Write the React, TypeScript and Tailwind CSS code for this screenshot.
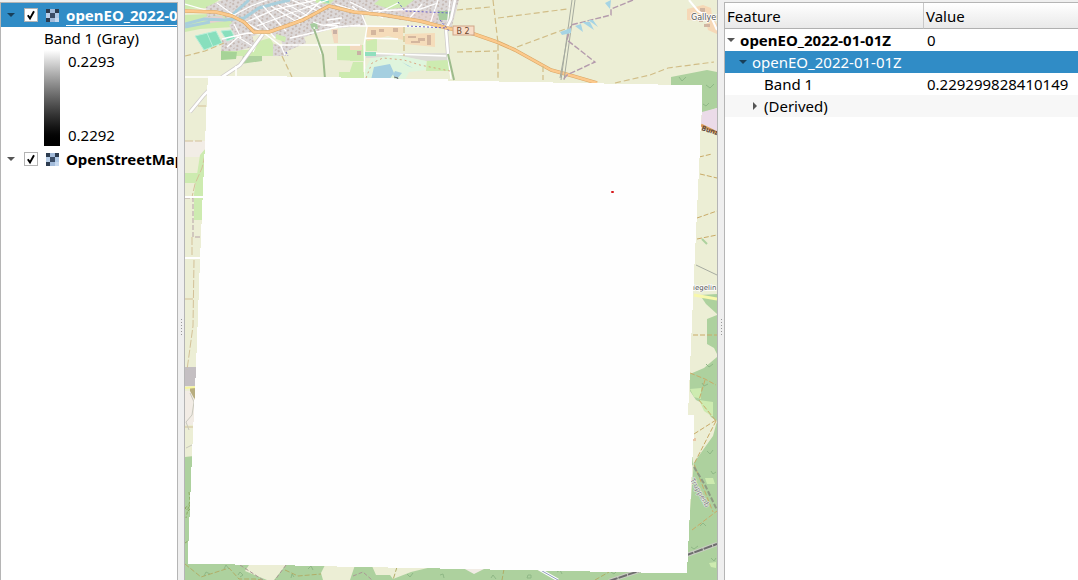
import React from "react";

function Arrow({ open = true, color = "#555", label, className = "" }: { open?: boolean; color?: string; label: string; className?: string }) {
  return (
    <button type="button" aria-label={label} aria-expanded={open} className={"flex h-3 w-3 shrink-0 items-center justify-center " + className}>
      <svg width="8" height="8" viewBox="0 0 8 8">
        <path d={open ? "M0 2H8L4 6Z" : "M2 0V8L6 4Z"} fill={color} />
      </svg>
    </button>
  );
}

function RasterIcon() {
  const cells = [
    [0, 0, "#2d3c50"], [4, 0, "#a3bbda"], [9, 0, "#2d3c50"],
    [0, 4, "#b9cfe9"], [4, 4, "#3b4c66"], [9, 4, "#b0c9e6"],
    [0, 9, "#2d3c50"], [4, 9, "#a3bbda"], [9, 9, "#c6d8ee"],
  ] as const;
  return (
    <svg width="13" height="13" viewBox="0 0 13 13" className="shrink-0" shapeRendering="crispEdges">
      {cells.map(([x, y, c]) => (
        <rect key={x + "-" + y} x={x} y={y} width={x === 4 ? 5 : 4} height={y === 4 ? 5 : 4} fill={c} />
      ))}
    </svg>
  );
}

function LayerRow({ name, selected = false }: { name: string; selected?: boolean }) {
  return (
    <div className={"flex h-6 items-center overflow-hidden whitespace-nowrap " + (selected ? "bg-[#308cc6] text-white" : "")}>
      <Arrow label={"Toggle " + name} color={selected ? "#183f5a" : "#555"} className="ml-1" />
      <label className="ml-[7px] flex items-center">
        <span className="grid h-[14px] w-[14px] shrink-0">
          <input type="checkbox" defaultChecked className="peer col-start-1 row-start-1 h-[14px] w-[14px] appearance-none border border-[#b4b4b4] bg-white" />
          <svg width="14" height="14" viewBox="0 0 14 14" className="pointer-events-none invisible col-start-1 row-start-1 peer-checked:visible">
            <path d="M3.8 7.2L6 10.4L10 3.2" fill="none" stroke="#000" strokeWidth="1.9" />
          </svg>
        </span>
        <span className="ml-2 flex"><RasterIcon /></span>
        <span className={"ml-[7px] font-bold " + (selected ? "underline decoration-1 underline-offset-4" : "")}>{name}</span>
      </label>
    </div>
  );
}

function Splitter() {
  return (
    <div role="separator" aria-orientation="vertical" className="flex w-[6px] shrink-0 flex-col items-center justify-center gap-[2px] bg-[#efefef] pt-[73px]">
      {[0, 1, 2, 3, 4, 5].map((i) => (
        <span key={i} className="h-px w-px bg-[#999]" />
      ))}
    </div>
  );
}

function MapCanvas() {
  return (
    <svg className="h-full w-full" viewBox="185 0 532 580" preserveAspectRatio="xMinYMin slice" role="img" aria-label="Map canvas">
      <defs>
        <pattern id="houses" width="9" height="7" patternUnits="userSpaceOnUse" patternTransform="rotate(-28)">
          <rect width="9" height="7" fill="#dcd8d8" />
          <path d="M1 1h2v2H1zM5 0h2v2H5zM7 4h2v2H7zM3 5h2v1H3z" fill="#c6b9b3" />
        </pattern>
      </defs>
      <rect x="185" y="0" width="532" height="580" fill="#eceed5" />

      <g id="fields">
        <path d="M185 0H219L207 8L185 9Z" fill="#cdebb0" />
        <path d="M185 15L210 14L236 18L234 27L200 29L185 32Z" fill="#cdebb0" />
        <path d="M204 17L222 16L226 21L210 23Z" fill="#e6cfd0" />
        <path d="M270 38L276 48L273 56L262 56L250 50L252 43Z" fill="#cdebb0" />
        <path d="M221 50H273V56H221Z" fill="#cdebb0" />
        <path d="M221 51L237 52L236 59L221 60Z" fill="#a6d397" />
        <path d="M243 56H262V61L241 64Z" fill="#add19e" />
        <path d="M337 45H361V61L337 60ZM339 72H372V79H339Z" fill="#cdebb0" />
        <path d="M350 45H364V61H350ZM353 62H363V80H350V71Z" fill="#cdebb0" />
        <path d="M366 40L377 37V51H366Z" fill="#cdebb0" />
        <path d="M427 59L447 57L450 71H426Z" fill="#cdebb0" />
        <path d="M366 53H447L448 60L426 61L405 57L366 58Z" fill="#dcdcd6" />
        <path d="M671 77L707 70L717 72V108L702 113V85H671Z" fill="#add19e" />
        <path d="M702 112L717 108V132L701 124Z" fill="#ebdbe8" />
      </g>

      <g id="town">
        <path d="M206 7L222 0H459L453 22L451 30L430 24L408 21L369 15L338 7L345 20L338 27L304 37L306 43L285 52L281 40L264 30L245 29L238 27L222 15L207 17Z" fill="url(#houses)" />
        <path d="M338 7L364 14L365 26L338 28L322 24Z" fill="url(#houses)" />
        <path d="M222 38L252 35L255 46L238 51H221ZM273 44L287 46L286 56H273ZM235 21L264 31L254 36L235 36L229 25Z" fill="url(#houses)" />
        <path d="M313 0H334L330 4L317 3ZM379 0H414L405 7L390 9L374 4ZM276 34L286 37L285 42L276 39Z" fill="#cdebb0" />
        <path d="M392 9L438 12L436 22L408 18Z" fill="#e6cfcd" opacity=".55" />
        <path d="M438 11H453L449 20H439ZM310 24L317 22L318 29H312Z" fill="#a8cda0" />
        <path d="M195 36L216 31L222 43L204 50ZM221 31L231 30L235 38L227 41Z" fill="#88dfbd" stroke="#b7eed9" />
        <path d="M207 33L213 47" stroke="#b7eed9" />
        <path d="M320 0l9 2" stroke="#8ddcba" strokeWidth="2" />
        <path d="M366 27L403 27V40L388 36L367 41ZM405 34L435 33V47L405 44Z" fill="#f5dcba" />
        <path d="M371 30h5v5h-5zM379 29h5v3h-5zM393 28h5v4h-5zM408 36h8v2h-8zM418 38h7v3h-7zM411 41h9v2h-9zM427 35h4v10h-4z" fill="#d4b69e" />
        <path d="M331 29h7v14h-4zM350 45h12v5h-12z" fill="#f2d9bf" />
        <path d="M333 30h4v4h-4zM357 51h4v4h-4z" fill="#c9b1a5" />
      </g>

      <g fill="none">
        <path d="M185 24L204 19L225 20L244 18L259 8L277 3L290 0M231 16L249 0M185 27L210 22" stroke="#a9cfdc" strokeWidth="3" />
        <g stroke="#fff" strokeWidth="1.3">
          <path d="M185 4L223 15M217 3L235 16L262 32M234 15L251 6L267 0M254 14L275 38M263 6L286 31M271 6L300 24M278 5L302 19M285 3L308 16M292 0L320 12M305 0L321 8M246 22L276 9L316 0M257 26L291 13L328 0M289 24L306 15L321 1M222 39L248 33L261 34M227 47L238 37L254 47M234 24L241 38M262 32L253 52M264 33L281 46L285 55M279 45H360M290 38L338 27L360 25M313 22L322 25L338 26M314 27L321 54M327 20L342 18M326 25L340 23M352 6L362 15L367 27L364 45L365 79M350 26H367M365 38L398 39" />
          <path d="M335 4L369 15M350 2L383 18M373 11L420 9L438 3M378 13L398 3M407 21L422 4M438 0L430 24M450 0L447 28M367 26L450 27M366 53L446 56M447 29L448 58L451 79" />
        </g>
        <path d="M455 0L451 19L446 29L448 54M263 34L240 65L222 77L204 95L190 112" stroke="#d0cccb" strokeWidth="4" />
        <path d="M455 0L451 19L446 29L448 54M263 34L240 65L222 77L204 95L190 112" stroke="#fff" strokeWidth="2.5" />
        <path d="M236 66V76M185 77H212" stroke="#fff" strokeWidth="1.5" />
        <path d="M314 29L323 55L325 79M448 54L454 80" stroke="#9dbb8c" strokeWidth="2" />
        <path d="M185 11L216 12L232 16L244 22L254 32L269 32L303 20L329 6L354 12L384 15L420 21L447 28L474 34L497 42L515 50L551 70L573 76L597 83" stroke="#d9a765" strokeWidth="3.6" strokeLinejoin="round" />
        <path d="M185 11L216 12L232 16L244 22L254 32L269 32L303 20L329 6L354 12L384 15L420 21L447 28L474 34L497 42L515 50L551 70L573 76L597 83" stroke="#fcc98c" strokeWidth="2.4" strokeLinejoin="round" />
        <path d="M185 56L205 51L224 43M282 56L292 77M404 27V56M457 10L490 7M493 0L498 43L498 80M498 18L567 9M457 52L497 51M517 47L568 28M543 66V80M615 83L650 75L668 68L714 62" stroke="#d1bd87" strokeWidth="1.2" strokeDasharray="6 3" />
        <path d="M572 0L561 80M575 0L564 80M569 29L560 78" stroke="#a5aa9f" strokeWidth="1" />
        <path d="M633 0L611 9V15L571 25L567 40L595 62L567 75L563 80" stroke="#b49bad" strokeWidth="1.4" strokeDasharray="6 2" />
        <path d="M398 2L405 11L450 13M407 26L447 28M286 52L288 56M440 20L450 32" stroke="#6963cc" strokeWidth="1" strokeDasharray="2 2" />
      </g>

      <g id="lakes">
        <path d="M371 58L397 55L426 61L426 70L409 72L405 80H367L365 70Z" fill="#dff5dd" />
        <path d="M374 67L390 64L394 73L389 80H371ZM395 71L402 73L397 79L393 75ZM402 62L408 66L413 68" fill="#a5cfe0" />
        <path d="M366 78L372 63L383 58L404 60L420 65L450 71" fill="none" stroke="#d8936d" strokeDasharray="2 3" strokeWidth=".8" />
        <path d="M365 52H376V56H365Z" fill="#90dfbe" />
        <path d="M394 77L398 78L397 80" stroke="#666" fill="none" />
        <path d="M560 32L571 28L571 33L562 35ZM575 26L583 32L581 24ZM582 22L594 30L590 22ZM588 20L598 27L593 20ZM605 3L611 0L610 9Z" fill="#a6d4e4" />
      </g>

      <rect x="453" y="26" width="21" height="9" fill="#f8ddc7" stroke="#d0a487" />
      <text x="463" y="34" textAnchor="middle" fontFamily="DejaVu Sans, sans-serif" fontSize="8" fill="#6a472d">B 2</text>
      <path d="M687 9L703 5L711 8L712 17L717 24V34L708 30L706 21L687 20Z" fill="#f6d8b7" />
      <path d="M700 8h5v4h-5zM704 24h6v3h-6zM699 19h4v3h-4z" fill="#d0b5a1" />
      <path d="M689 0L698 11L712 19L717 30" fill="none" stroke="#fff" strokeWidth="2" />
      <text x="691" y="20" fontFamily="DejaVu Sans, sans-serif" fontSize="8" fill="#555" stroke="#fff" strokeWidth="1.5" paintOrder="stroke">Gallyer</text>
      <path d="M679 77l3 4 4-4M706 85l4 3 4-4M703 104l3 2 3-3" fill="none" stroke="#8fb886" />
      <path d="M701 125L717 133" stroke="#dd9c55" strokeWidth="3" />
      <text x="701" y="130" transform="rotate(18 701 130)" fontFamily="Noto Sans, sans-serif" fontSize="7" fontWeight="700" fill="#5f493e">Bunzl</text>

      <g id="west">
        <path d="M185 141H206V157H185Z" fill="#f2ede6" />
        <path d="M185 173H203V183H185ZM200 155L206 148L203 220H194V194Z" fill="#cdebb0" />
        <path d="M185 367H198V386H185Z" fill="#c4bfc2" />
        <path d="M190 388H197V400L190 396Z" fill="#b7ad80" />
        <path d="M185 391H190L195 400V425H185Z" fill="#f2ece5" />
        <path d="M185 457L194 456V460L191 580H185Z" fill="#add19e" />
        <path d="M185 141H202M198 106H206M205 155L202 168L195 184L192 197M192 237V256M194 260L193 326L187 370M185 299H193M185 427H193L194 432" fill="none" stroke="#d4c198" strokeDasharray="8 2" />
        <path d="M185 198H193V237H202" fill="none" stroke="#b6a2a7" strokeDasharray="5 2" />
        <path d="M185 197H204M185 258H202" stroke="#fff" strokeWidth="2" />
        <path d="M185 388L196 387" stroke="#f7f6a0" strokeWidth="2" />
        <path d="M190 393L194 402L192 415L186 422L189 430M186 448L194 444" fill="none" stroke="#c8c8bd" />
        <path d="M189 492L190 500L186 518M185 508l4-3 2 3-3 3zM185 543l3-2" fill="none" stroke="#8daa62" strokeDasharray="3 2" />
      </g>

      <g id="east">
        <path d="M707 319L717 315V354L714 348L707 344Z" fill="#add19e" />
        <path d="M700 295L717 294V314L706 304Z" fill="#add19e" />
        <path d="M717 357L704 368L690 374V416L692 466L717 422ZM694 461L717 421V580H687V548Z" fill="#add19e" />
        <path d="M688 388L696 400L702 403L711 417L717 421L713 436L693 464L688 416Z" fill="#eceed5" />
        <path d="M690 389L701 388V399L694 397ZM699 400L713 402L713 417L704 411ZM705 478L713 478L715 484L707 484ZM709 563L716 562V568L711 567Z" fill="#cdebb0" />
        <path d="M699 157L712 154M700 174L717 178M697 218L717 211M697 239L717 235M693 335L717 335M690 373L705 379L716 385M705 380L699 400L716 421M716 420L694 434M716 421L694 464L713 512M692 530L717 511" fill="none" stroke="#c9aa67" strokeDasharray="5 2" />
        <path d="M692 438h4v3h-4z" fill="#e9c7a7" />
        <path d="M696 265L717 275" stroke="#a6aaa0" />
        <path d="M702 239L707 244" stroke="#add19e" strokeWidth="2" />
        <path d="M694 295L717 299" stroke="#f8f8ac" strokeWidth="3" />
        <text x="693" y="290" fontFamily="DejaVu Sans, sans-serif" fontSize="7" fill="#555" stroke="#fff" strokeWidth="1.5" paintOrder="stroke">iegelin</text>
        <path d="M694 467L705 485L717 510" stroke="#8f9b83" strokeWidth="2" strokeDasharray="5 2" fill="none" />
        <text x="690" y="480" transform="rotate(60 690 480)" fontFamily="Noto Sans, sans-serif" fontSize="7" fill="#777" stroke="#eee" strokeWidth="1" paintOrder="stroke">Truppenb</text>
        <path d="M706 364l3 3 4-3M702 383l2 3 4-2M707 451l3 3 3-4M711 471l2 3 3-2M700 526l3-3 3 3M691 547l3 2 4-3M711 558l3 3 2-3" fill="none" stroke="#8fb886" />
      </g>

      <g id="south">
        <path d="M185 563L690 571V580H185Z" fill="#add19e" />
        <path d="M249 565H286L274 580H267L245 571ZM325 565H355L350 580H323L321 573ZM372 566H436L411 572L393 579L390 575L376 575Z" fill="#eceed5" />
        <path d="M463 568H486L474 574Z" fill="#f1ece5" />
        <path d="M185 564L201 577L229 568L239 579H255L263 580M285 570L298 576L321 574M397 567L393 580M504 569L502 580M595 580L609 572" fill="none" stroke="#b1ad67" strokeDasharray="5 2" />
        <path d="M240 565L263 580M286 565L275 580M353 576L363 572L372 580" fill="none" stroke="#aa9795" strokeDasharray="4 2" />
        <path d="M537 568L558 580" stroke="#fff" strokeWidth="3" />
        <path d="M537 568L558 580" stroke="#8e9bbb" />
        <path d="M609 581L687 555L717 544" fill="none" stroke="#c9cdc2" strokeWidth="4" />
        <path d="M609 581L687 555L717 544" fill="none" stroke="#6d6d6d" strokeWidth="2" strokeDasharray="9 1" />
        <path d="M204 576l2-4 4 2M224 569l2-4 3 4M238 575l2-3 3 3-3 2M291 578l1-4 2 3M308 569l3-3 2 4M407 574l3 3 3-4M440 575l3-1 1 4M491 578l2-3 3 4M528 575h3v3h-4zM611 572l3 2 3-3M557 572l3-2 2 4" fill="none" stroke="#8fb886" />
      </g>

      <path d="M208 76H287V77H341V78H394V79H448V81H499V82H553V83H604V84H658V85H702V115H701L700 147L694 275L691 345L688 415H694V430L692 466L690 510L687 573H641V572H590V571H540V570H490V569H440V568H388V567H337V566H295V565H235V564H188V553L189 530L192 455L196 367L200 260L204 165L206 120L207 94Z" fill="#fefefe" shapeRendering="crispEdges" />
      <rect x="611" y="191" width="3" height="2" rx="1" fill="#d7191c" />
    </svg>
  );
}

export default function App() {
  return (
    <main className="flex h-screen overflow-hidden bg-[#efefef] font-['Noto_Sans',sans-serif] text-[15px] leading-[22px] text-black">
      <section aria-label="Layers" className="mt-[2px] w-[178px] shrink-0 overflow-hidden border border-b-0 border-[#b5b5b5] bg-white">
        <LayerRow name="openEO_2022-01-01Z" selected />
        <div className="pl-[43px]">
          <div className="h-[23px]">Band 1 (Gray)</div>
          <div className="flex h-[97px] gap-2">
            <div className="h-24 w-4 bg-linear-to-b from-white to-black" />
            <div className="flex h-24 flex-col justify-between">
              <span>0.2293</span>
              <span>0.2292</span>
            </div>
          </div>
        </div>
        <LayerRow name="OpenStreetMap" />
      </section>
      <Splitter />
      <section aria-label="Map" className="min-w-0 flex-1 overflow-hidden border-x border-[#b5b5b5]">
        <MapCanvas />
      </section>
      <Splitter />
      <section aria-label="Identify results" className="mt-[2px] w-[354px] shrink-0 overflow-hidden border-t border-l border-[#b5b5b5] bg-white">
        <table className="w-full table-fixed border-separate border-spacing-0 text-left whitespace-nowrap">
          <thead>
            <tr className="h-[26px]">
              <th className="w-[199px] border-r border-b border-r-[#c8c8c8] border-b-[#b0b0b0] bg-linear-to-b from-white to-[#e9e9e9] p-0 pl-[2px] font-normal">Feature</th>
              <th className="border-b border-[#b0b0b0] bg-linear-to-b from-white to-[#e9e9e9] p-0 pl-[2px] font-normal">Value</th>
            </tr>
          </thead>
          <tbody>
            <tr className="h-[22px]">
              <td className="p-0 font-bold"><div className="flex items-center gap-[3px]"><Arrow label="Toggle layer" />openEO_2022-01-01Z</div></td>
              <td className="p-0 pl-[3px]">0</td>
            </tr>
            <tr className="h-[22px] bg-[#308cc6] text-white">
              <td className="p-0"><div className="flex items-center gap-[3px] pl-3"><Arrow label="Toggle feature" color="#183f5a" />openEO_2022-01-01Z</div></td>
              <td className="p-0" />
            </tr>
            <tr className="h-[22px]">
              <td className="p-0 pl-[39px]">Band 1</td>
              <td className="p-0 pl-[3px]">0.229299828410149</td>
            </tr>
            <tr className="h-[22px] bg-[#f7f7f7]">
              <td className="p-0"><div className="flex items-center gap-[3px] pl-6"><Arrow open={false} label="Toggle derived" />(Derived)</div></td>
              <td className="p-0" />
            </tr>
          </tbody>
        </table>
      </section>
    </main>
  );
}
